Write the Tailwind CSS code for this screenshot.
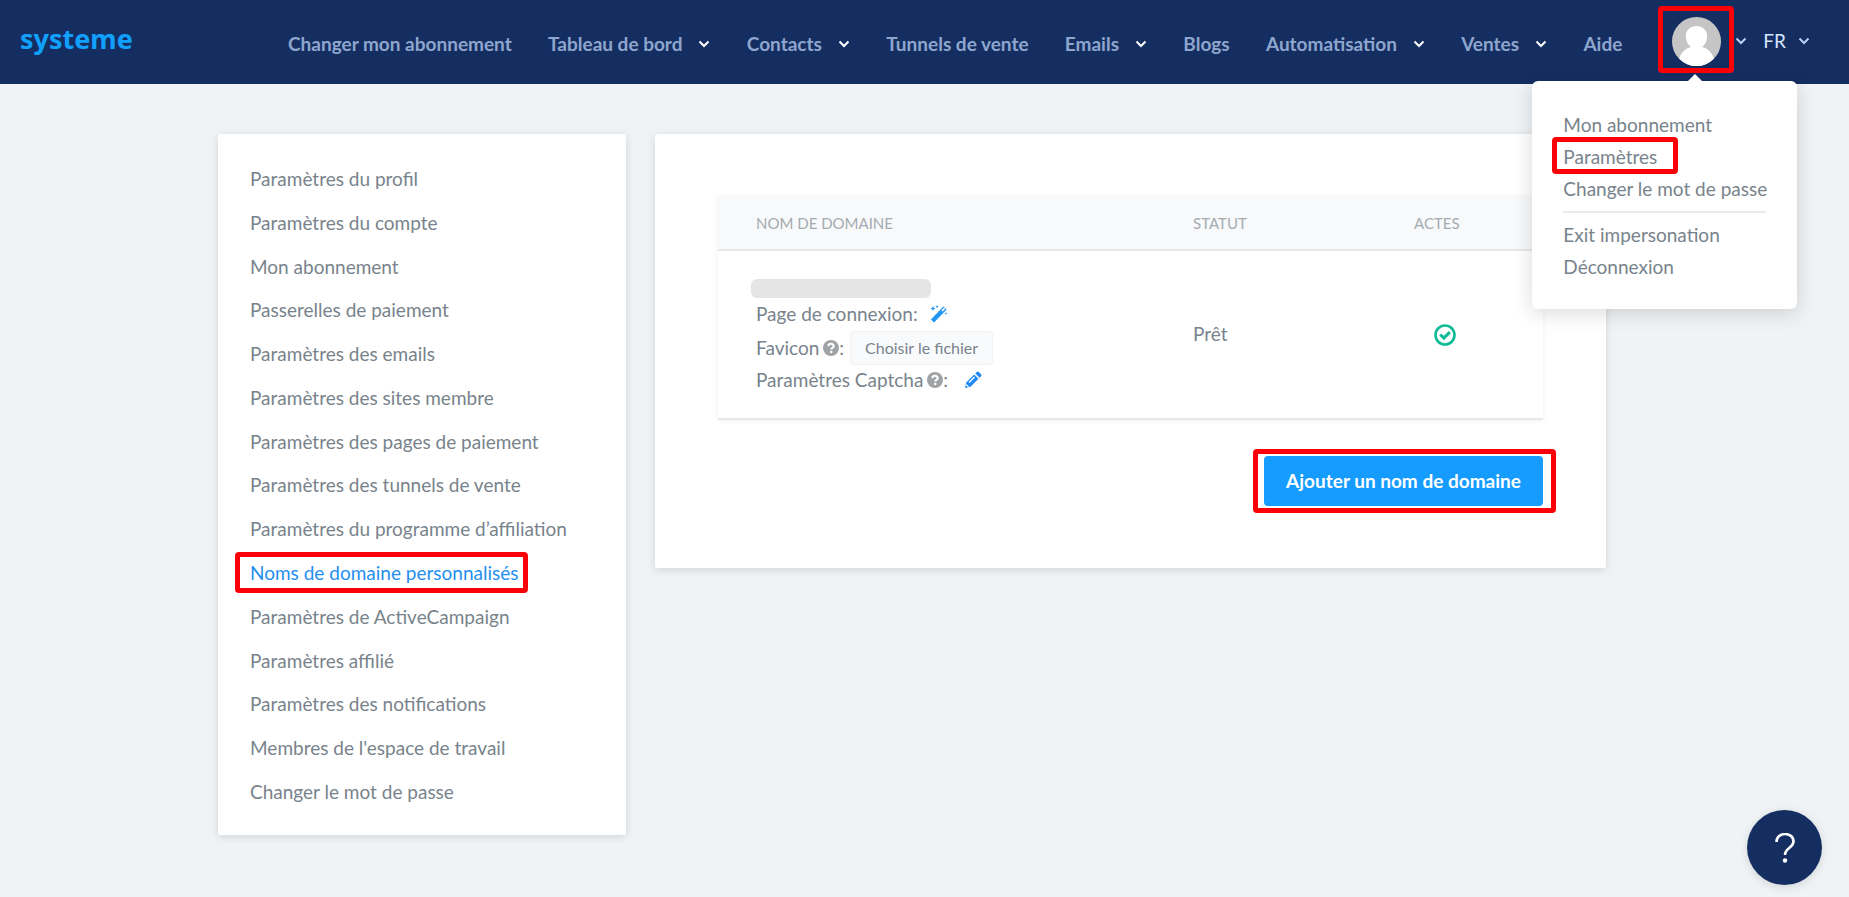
<!DOCTYPE html>
<html lang="fr">
<head>
<meta charset="utf-8">
<meta name="viewport" content="width=device-width, initial-scale=1">
<title>Noms de domaine personnalisés</title>
<script src="https://cdn.jsdelivr.net/npm/@tailwindcss/browser@4"></script>
</head>
<body class="min-h-screen bg-[#eff3f6] font-['Lato','Liberation_Sans',sans-serif] text-[19px] text-[#78838c]">
<svg class="hidden" aria-hidden="true">
  <symbol id="chevron" viewBox="0 0 12 8"><path d="M1.500 1.500 6 6l4.500-4.500" fill="none" stroke="currentColor" stroke-width="2"/></symbol>
  <symbol id="help" viewBox="0 0 16 16"><circle cx="8" cy="8" r="8" fill="#9fa3a6"/><path d="M5.300 6.300C5.300 2.900 10.700 2.900 10.700 6c0 1.900-2.500 1.900-2.500 3.600" fill="none" stroke="#fff" stroke-width="2"/><circle cx="8.200" cy="12" r="1.300" fill="#fff"/></symbol>
</svg>

<header class="flex h-21 items-center bg-[#152e62] pl-5 pr-[39px]">
  <a href="#" class="w-[268px] shrink-0 pb-1.5 font-['Noto_Sans',sans-serif] text-[27px] leading-8 font-bold text-[#12a0ff]">systeme</a>
  <nav class="flex min-w-0 grow items-center justify-between whitespace-nowrap pt-1 font-bold text-[#8ea6cd]">
    <a href="#">Changer mon abonnement</a>
    <button class="flex items-center gap-4">Tableau de bord <svg class="h-2 w-3 text-white"><use href="#chevron"/></svg></button>
    <button class="flex items-center gap-4">Contacts <svg class="h-2 w-3 text-white"><use href="#chevron"/></svg></button>
    <a href="#">Tunnels de vente</a>
    <button class="flex items-center gap-4">Emails <svg class="h-2 w-3 text-white"><use href="#chevron"/></svg></button>
    <a href="#">Blogs</a>
    <button class="flex items-center gap-4">Automatisation <svg class="h-2 w-3 text-white"><use href="#chevron"/></svg></button>
    <button class="flex items-center gap-4">Ventes <svg class="h-2 w-3 text-white"><use href="#chevron"/></svg></button>
    <a href="#">Aide</a>
  </nav>
  <div class="ml-[50px] flex shrink-0 items-center pb-0.5 text-[#b9d0f5]">
    <div class="relative">
      <button class="flex items-center gap-3.5" aria-label="Menu du compte" aria-expanded="true">
        <svg class="size-[49px] rounded-full" viewBox="0 0 49 49"><path fill="#c5c5c5" d="M0 0h49v49H0z"/><path fill="#fff" d="M24.500 9C17.500 9 13 14 14 21c.5 4 2 7 5 9-6 1.500-10 5.500-12 12v7h35v-7c-2-6.500-6-10.500-12-12 3-2 4.500-5 5-9 1-7-3.500-12-10.500-12z"/></svg>
        <svg class="h-2 w-3"><use href="#chevron"/></svg>
      </button>
      <span class="pointer-events-none absolute -top-[11px] -left-3.5 h-[67px] w-[76px] rounded-sm border-5 border-[#fb0007]"></span>
      <div class="absolute top-[64px] -left-[140px] z-10 w-[265px] rounded-md bg-white px-[31px] pt-7 pb-[26px] text-[#78838c] shadow-[0_4px_20px_rgba(0,0,0,0.15)]">
        <span class="absolute -top-[7px] left-[155px] border-x-8 border-b-8 border-x-transparent border-b-white"></span>
        <ul class="leading-8 whitespace-nowrap">
          <li><a href="#">Mon abonnement</a></li>
          <li class="relative"><a href="#">Paramètres</a><span class="pointer-events-none absolute -top-1 -left-[11px] h-[37px] w-[126px] rounded-sm border-5 border-[#fb0007]"></span></li>
          <li><a href="#">Changer le mot de passe</a></li>
          <li class="mt-1.5 border-t-2 border-[#e9ebee] pt-1.5"><a href="#">Exit impersonation</a></li>
          <li><a href="#">Déconnexion</a></li>
        </ul>
      </div>
    </div>
    <button class="ml-4 flex items-center gap-3 text-[#d5e5ff]">FR <svg class="h-2 w-3 text-[#b9d0f5]"><use href="#chevron"/></svg></button>
  </div>
</header>

<main class="pt-[50px] pr-[25px] pb-15">
  <div class="mx-auto flex max-w-[1388px] items-start gap-[29px]">
    <aside class="w-[408px] shrink-0 rounded-xs bg-white px-8 pt-8 pb-[30px] shadow-[0_2px_8px_rgba(0,0,0,0.12)]">
      <ul class="flex min-h-[639px] flex-col justify-between leading-[26px]">
        <li><a href="#">Paramètres du profil</a></li>
        <li><a href="#">Paramètres du compte</a></li>
        <li><a href="#">Mon abonnement</a></li>
        <li><a href="#">Passerelles de paiement</a></li>
        <li><a href="#">Paramètres des emails</a></li>
        <li><a href="#">Paramètres des sites membre</a></li>
        <li><a href="#">Paramètres des pages de paiement</a></li>
        <li><a href="#">Paramètres des tunnels de vente</a></li>
        <li><a href="#">Paramètres du programme d’affiliation</a></li>
        <li class="relative"><a href="#" class="text-[#1f8ff0]" aria-current="page">Noms de domaine personnalisés</a><span class="pointer-events-none absolute -top-2 -left-[15px] h-[41px] w-[293px] rounded-sm border-5 border-[#fb0007]"></span></li>
        <li><a href="#">Paramètres de ActiveCampaign</a></li>
        <li><a href="#">Paramètres affilié</a></li>
        <li><a href="#">Paramètres des notifications</a></li>
        <li><a href="#">Membres de l'espace de travail</a></li>
        <li><a href="#">Changer le mot de passe</a></li>
      </ul>
    </aside>

    <section class="min-w-0 grow rounded-xs bg-white px-[63px] pt-[63px] pb-[62px] shadow-[0_2px_8px_rgba(0,0,0,0.12)]">
      <table class="w-full table-fixed border-b-2 border-[#e6e9ec] text-left shadow-[0_0_6px_rgba(0,0,0,0.07)]">
        <thead>
          <tr class="h-[53px] border-b-2 border-[#e6e9ec] bg-[#f7f9fb] text-[15px] text-[#a5abb0]">
            <th class="w-[437px] pl-[38px] font-normal">NOM DE DOMAINE</th>
            <th class="w-[200px] pl-[38px] font-normal">STATUT</th>
            <th class="pl-[59px] font-normal">ACTES</th>
          </tr>
        </thead>
        <tbody>
          <tr>
            <td class="pt-7 pb-6 pl-[38px]">
              <div class="-ml-[5px] h-[19px] w-45 rounded-md bg-[#e5e5e5]"></div>
              <div class="flex h-8 items-center gap-3">Page de connexion:
                <button aria-label="Modifier la page de connexion"><svg class="block size-[18px]" viewBox="0 0 18 18"><path d="m2.500 16 12.500-13" stroke="#2196f3" stroke-width="4.500"/><path d="m12 6 2.600-2.700" stroke="#fff" stroke-width="1.800"/><path d="m3 1 .8 1.700 1.700.8-1.700.8L3 6l-.8-1.700L.5 3.500l1.700-.8zM7 0l.5 1.300 1.300.5-1.300.5L7 3.600l-.5-1.300-1.300-.5 1.300-.5zM16 7l.4 1.200 1.200.4-1.200.4L16 10.200l-.4-1.200-1.200-.4 1.200-.4z" fill="#2196f3"/></svg></button>
              </div>
              <div class="flex h-9 items-center"><span class="mr-1">Favicon</span>
                <svg class="size-4"><use href="#help"/></svg>:
                <button class="ml-1.5 rounded-sm border border-[#f1f2f4] bg-[#f9fafc] px-3.5 py-1 text-[16px] leading-6">Choisir le fichier</button>
              </div>
              <div class="flex h-7 items-center"><span class="mr-1">Paramètres Captcha</span>
                <svg class="size-4"><use href="#help"/></svg>:
                <button class="ml-4" aria-label="Modifier les paramètres Captcha"><svg class="block size-[18px]" viewBox="0 0 18 18"><path d="M1 17l1.200-5.500L10.200 3.500l4.300 4.300-8 8zM11.300 2.400l1.500-1.500q1-.9 2 0L17.100 3.200q.9 1 0 2l-1.500 1.500z" fill="#2089f0"/><path d="m5 11.500 5.500-5.500M2.200 13.500l2.300 2.300" stroke="#fff" stroke-width="1.200"/></svg></button>
              </div>
            </td>
            <td class="pl-[38px]">Prêt</td>
            <td class="pl-[79px]">
              <svg class="size-[22px]" viewBox="0 0 22 22" role="img" aria-label="Prêt"><circle cx="11" cy="11" r="9.500" fill="none" stroke="#0fbb96" stroke-width="2.600"/><path d="m6.300 10.500 3.500 3.600 6-6" fill="none" stroke="#0fbb96" stroke-width="3"/></svg>
            </td>
          </tr>
        </tbody>
      </table>
      <div class="mt-9 flex justify-end">
        <div class="relative">
          <button class="h-[50px] w-[279px] rounded-sm bg-[#169bff] font-bold text-white">Ajouter un nom de domaine</button>
          <span class="pointer-events-none absolute -inset-y-[7px] -right-[13px] -left-[11px] rounded-sm border-5 border-[#fb0007]"></span>
        </div>
      </div>
    </section>
  </div>
</main>

<button class="fixed right-[27px] bottom-3 flex size-[75px] items-center justify-center rounded-full bg-[#152e62] text-white shadow-[0_2px_10px_rgba(0,0,0,0.12)]" aria-label="Aide">
  <svg class="h-[30px] w-5" viewBox="0 0 20 30"><path d="M1.500 9C1.500-1.500 18.500-1.500 18.500 8.500c0 6.500-8.500 6-8.500 13.500" fill="none" stroke="currentColor" stroke-width="2.600"/><circle cx="10" cy="27.500" r="2.200" fill="currentColor"/></svg>
</button>
</body>
</html>
